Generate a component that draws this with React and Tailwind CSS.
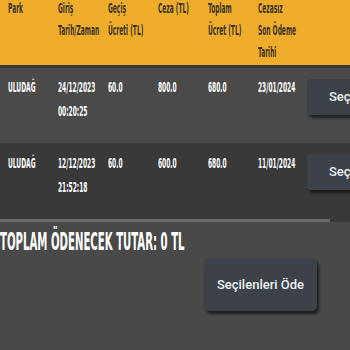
import React from "react";

function C({ children }) {
  return (
    <span className="inline-block origin-left scale-x-[0.47] whitespace-nowrap font-bold font-['DejaVu_Sans_Condensed']">
      {children}
    </span>
  );
}

function HeadCell({ lines }) {
  return (
    <div className="w-[50px] shrink-0 pl-2 -mt-[3px] flex flex-col">
      {lines.map((l, i) => (
        <div key={i} className="h-[22px] leading-[22px] text-[14px] text-[#3a3426]">
          <C>{l}</C>
        </div>
      ))}
    </div>
  );
}

function Cell({ lines }) {
  return (
    <div className="w-[50px] shrink-0 pl-2 pt-[7px] flex flex-col">
      {lines.map((l, i) => (
        <div key={i} className="h-[24px] leading-[24px] text-[14px] text-white">
          <C>{l}</C>
        </div>
      ))}
    </div>
  );
}

function Row({ data, bg, btnTop }) {
  return (
    <div className={"flex h-[75px] " + bg}>
      <Cell lines={[data.park]} />
      <Cell lines={data.giris} />
      <Cell lines={[data.gecis]} />
      <Cell lines={[data.ceza]} />
      <Cell lines={[data.toplam]} />
      <Cell lines={[data.son]} />
      <div className={"shrink-0 pl-[7px] " + btnTop}>
        <button className="h-[36px] w-[70px] rounded-[4px] bg-[#3d4249] text-left pl-[22px] text-[13px] font-medium text-[#eceff1] font-['Roboto'] shadow-[2px_3px_3px_rgba(0,0,0,0.55)]">
          Seç
        </button>
      </div>
    </div>
  );
}

export default function App() {
  const rows = [
    { park: "ULUDAĞ", giris: ["24/12/2023", "00:20:25"], gecis: "60.0", ceza: "800.0", toplam: "680.0", son: "23/01/2024" },
    { park: "ULUDAĞ", giris: ["12/12/2023", "21:52:18"], gecis: "60.0", ceza: "600.0", toplam: "680.0", son: "11/01/2024" },
  ];
  return (
    <div className="w-[350px] h-[350px] bg-[#494949] overflow-hidden">
      <div className="w-[350px] overflow-hidden">
        <div className="w-[420px]">
          <div className="flex h-[65px] bg-[#f0ad2c] overflow-hidden">
            <HeadCell lines={["Park"]} />
            <HeadCell lines={["Giriş", "Tarih/Zaman"]} />
            <HeadCell lines={["Geçiş", "Ücreti (TL)"]} />
            <HeadCell lines={["Ceza (TL)"]} />
            <HeadCell lines={["Toplam", "Ücret (TL)"]} />
            <HeadCell lines={["Cezasız", "Son Ödeme", "Tarihi"]} />
          </div>
          <div className="h-[3px] bg-[#3b3b3b]" />
          <Row data={rows[0]} bg="bg-[#4a4a4a]" btnTop="pt-[11px]" />
          <div className="h-[1px] bg-[#3f3f3f]" />
          <Row data={rows[1]} bg="bg-[#393939]" btnTop="pt-[10px]" />
        </div>
        <div className="flex h-[3px] bg-[#393939]">
          <div className="w-[330px] bg-[#6b6b6b]" />
        </div>
      </div>
      <div className="h-[32px] leading-[32px] text-[24px] text-white mt-[3px]">
        <C>TOPLAM ÖDENECEK TUTAR: 0 TL</C>
      </div>
      <div className="flex pl-[204px] mt-[1px]">
        <button className="h-[53px] w-[113px] rounded-[5px] bg-[#3d4249] text-[13px] font-medium text-[#eceff1] font-['Roboto'] shadow-[2px_3px_3px_rgba(0,0,0,0.6)]">
          Seçilenleri Öde
        </button>
      </div>
    </div>
  );
}
